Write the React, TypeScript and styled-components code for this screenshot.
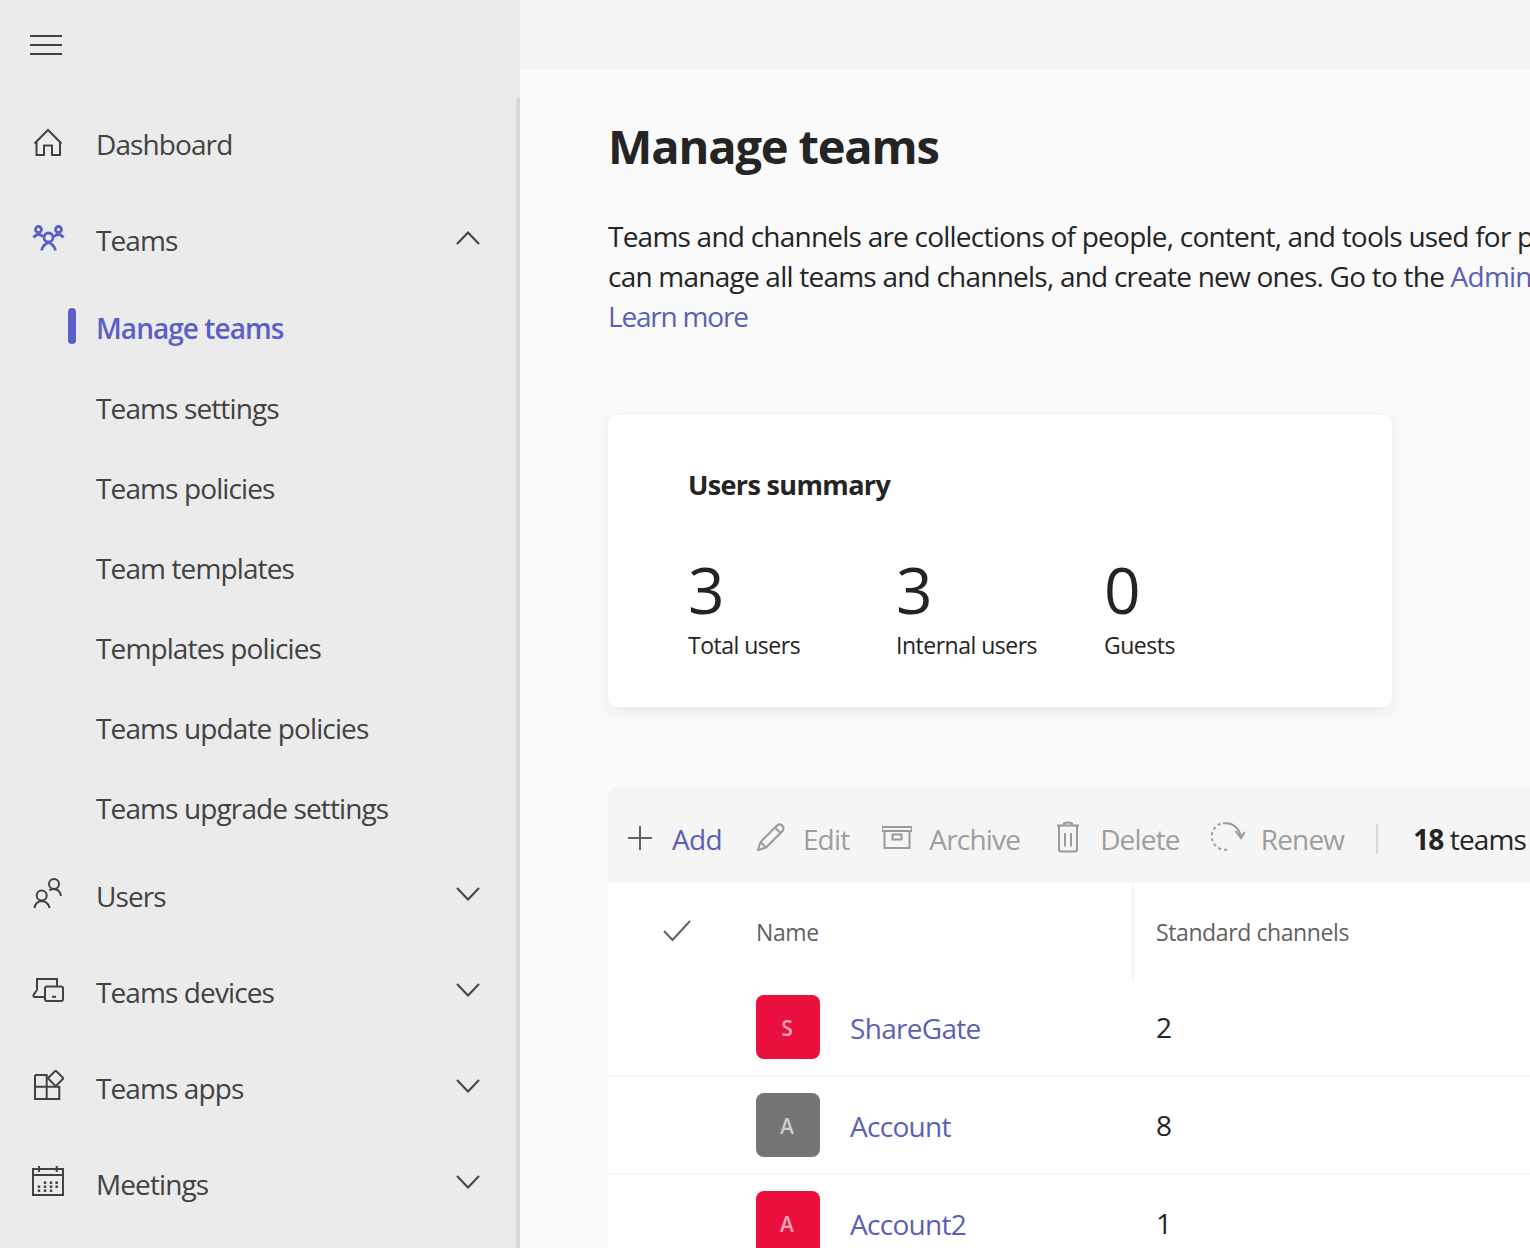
import React from 'react';
import styled, { createGlobalStyle } from 'styled-components';

const GlobalStyle = createGlobalStyle`
  html, body {
    margin: 0;
    padding: 0;
    overflow: hidden;
    background: #fafafa;
  }
  * {
    box-sizing: border-box;
  }
`;

const Shell = styled.div`
  display: flex;
  width: 1530px;
  height: 1248px;
  overflow: hidden;
  font-family: 'Open Sans', 'Noto Sans', sans-serif;
  font-size: 28px;
  letter-spacing: -0.7px;
  color: #242424;
`;

const Sidebar = styled.nav`
  position: relative;
  flex: 0 0 520px;
  background: #ebebeb;
`;

const ScrollThumb = styled.div`
  position: absolute;
  right: 0;
  top: 97px;
  bottom: 0;
  width: 4px;
  background: #d9d9d9;
  border-top-left-radius: 4px;
`;

const MenuBar = styled.div`
  display: flex;
  align-items: center;
  height: 96px;
  padding: 0 0 6px 30px;
`;

const NavRow = styled.div`
  display: flex;
  align-items: center;
  height: 96px;
  padding-left: 32px;
  color: #424242;
  letter-spacing: -0.9px;
`;

const NavIcon = styled.span`
  display: flex;
  width: 64px;
  flex: none;
  margin-top: -4px;
`;

const NavLabel = styled.span`
  flex: 1;
`;

const Chevron = styled.span`
  display: flex;
  margin-right: 40px;
  margin-top: -4px;
`;

const SubRow = styled.div<{ $active?: boolean }>`
  position: relative;
  display: flex;
  align-items: center;
  height: 80px;
  padding-left: 96px;
  letter-spacing: ${(p) => (p.$active ? '-0.95px' : '-0.88px')};
  color: ${(p) => (p.$active ? '#5b5fc7' : '#424242')};
  font-weight: ${(p) => (p.$active ? 600 : 400)};
`;

const ActiveMarker = styled.span`
  position: absolute;
  left: 68px;
  top: 20px;
  width: 8px;
  height: 36px;
  border-radius: 4px;
  background: #5b5fc7;
`;

const Main = styled.main`
  flex: 1;
  min-width: 0;
  overflow: hidden;
  background: #fafafa;
`;

const TopBar = styled.div`
  height: 70px;
  background: #f5f5f5;
`;

const Content = styled.div`
  width: 1300px;
  padding-left: 88px;
`;

const Title = styled.h1`
  margin: 44px 0 0;
  font-size: 47px;
  line-height: 64px;
  font-weight: 700;
  letter-spacing: -1.15px;
  color: #242424;
`;

const Intro = styled.p`
  margin: 38px 0 0;
  line-height: 40px;
  letter-spacing: -0.77px;
  white-space: nowrap;
`;

const TextLink = styled.a`
  color: #5b5fb5;
`;

const LearnMore = styled(TextLink)`
  letter-spacing: -1.2px;
`;

const SummaryCard = styled.section`
  width: 784px;
  height: 292px;
  margin-top: 79px;
  padding: 50px 80px 0;
  background: #fff;
  border-radius: 8px;
  box-shadow: 0 4px 16px rgba(0, 0, 0, 0.08);
`;

const CardTitle = styled.h2`
  margin: 0;
  font-size: 27px;
  line-height: 40px;
  font-weight: 700;
  letter-spacing: -0.65px;
`;

const Stats = styled.div`
  display: flex;
  margin-top: 46px;
`;

const Stat = styled.div`
  width: 208px;
`;

const StatValue = styled.div`
  font-size: 64px;
  line-height: 78px;
  letter-spacing: 0;
`;

const StatLabel = styled.div`
  font-size: 23px;
  line-height: 32px;
  letter-spacing: -0.5px;
`;

const TeamsPanel = styled.section`
  margin-top: 80px;
  background: #fff;
`;

const Toolbar = styled.div`
  display: flex;
  align-items: center;
  height: 96px;
  padding-left: 20px;
  padding-top: 8px;
  background: #f5f5f5;
  border-radius: 8px 8px 0 0;
  white-space: nowrap;
`;

const ToolItem = styled.div<{ $disabled?: boolean; $gap: number; $after: number }>`
  display: flex;
  align-items: center;
  gap: ${(p) => p.$gap}px;
  margin-right: ${(p) => p.$after}px;
  letter-spacing: ${(p) => (p.$disabled ? '-0.82px' : '-0.7px')};
  color: ${(p) => (p.$disabled ? '#9e9e9e' : '#5b5fb5')};
`;

const ToolDivider = styled.span`
  width: 2px;
  height: 30px;
  margin-right: 35px;
  background: #d9d9d9;
`;

const TeamCount = styled.div`
  color: #242424;
  letter-spacing: -0.9px;
  b {
    font-weight: 700;
  }
`;

const HeaderRow = styled.div`
  display: flex;
  align-items: center;
  height: 96px;
  padding-top: 2px;
  color: #616161;
  font-size: 23px;
  letter-spacing: -0.4px;
`;

const CheckCell = styled.div`
  display: flex;
  width: 148px;
  padding-left: 55px;
  margin-top: -2px;
`;

const NameHeader = styled.div`
  width: 376px;
`;

const ChannelHeader = styled.div`
  display: flex;
  align-items: center;
  height: 100%;
  padding-left: 22px;
  border-left: 2px solid #f3f3f3;
`;

const TeamRow = styled.div`
  display: flex;
  align-items: center;
  height: 98px;
  padding-left: 148px;
  border-bottom: 2px solid #f5f5f5;
`;

const Avatar = styled.div<{ $color: string }>`
  display: flex;
  align-items: center;
  justify-content: center;
  flex: none;
  width: 64px;
  height: 64px;
  padding: 2px 2px 0 0;
  border-radius: 8px;
  background: ${(p) => p.$color};
  color: rgba(255, 255, 255, 0.65);
  font-size: 21px;
  font-weight: 600;
  letter-spacing: 0;
`;

const TeamName = styled.a`
  width: 306px;
  margin-left: 30px;
  padding-top: 2px;
  color: #5b5fb5;
`;

const ChannelCount = styled.div`
  color: #242424;
`;

const Svg = styled.svg`
  display: block;
  flex: none;
  fill: none;
  stroke: currentColor;
  stroke-width: 2;
`;

const DarkSvg = styled(Svg)`
  color: #424242;
`;

const ToolSvg = styled(Svg)`
  color: #9a9a9a;
  margin-top: -4px;
`;

const MenuIcon = () => (
  <DarkSvg width="32" height="20" viewBox="0 0 32 20">
    <path d="M0 1h32M0 10h32M0 19h32" />
  </DarkSvg>
);

const HomeIcon = () => (
  <DarkSvg width="32" height="32" viewBox="0 0 32 32">
    <path d="M2.5 17.500L16 4l13.500 13.500M4.500 15.500V29H12V19.500h8V29h8V15.500" />
  </DarkSvg>
);

const TeamsIcon = () => (
  <Svg width="34" height="32" viewBox="0 -1 34 32" style={{ color: '#5b5fc7', strokeWidth: 2.8 }}>
    <circle cx="6.500" cy="6.500" r="3" />
    <circle cx="26.500" cy="6.500" r="3" />
    <circle cx="16.500" cy="14.500" r="4.500" />
    <path d="M1.500 14.500Q6 9 11 13.500M22 13.500Q27 9 31.500 14.500M9.500 27.500Q11 21.500 16.500 19.500Q22 21.500 23.500 27.500" />
  </Svg>
);

const UsersIcon = () => (
  <DarkSvg width="32" height="32" viewBox="0 0 32 32">
    <circle cx="9.700" cy="17.500" r="5" />
    <circle cx="22" cy="6" r="5" />
    <path d="M2.500 30Q3.500 23.500 9.700 23Q16 23.500 17.500 30M17.300 12.500Q20 10.800 23 11.200Q28 12 29 18" />
  </DarkSvg>
);

const DevicesIcon = () => (
  <DarkSvg width="32" height="28" viewBox="0 0 32 28">
    <path d="M5 14V3h20v7.500M5 14l-3.500 5q-.5 2 1.500 2h10" />
    <rect x="13" y="10.500" width="18" height="14.500" rx="2" />
    <path d="M20 20.800h4" />
  </DarkSvg>
);

const AppsIcon = () => (
  <DarkSvg width="32" height="32" viewBox="0 0 32 32">
    <path d="M3 5h11.700v24M3 5v24h24.300V16.700H3" />
    <path d="M23.700.5l7.800 7.800-7.800 7.800-7.800-7.800z" />
  </DarkSvg>
);

const calendarDots = [
  [13, 16.700], [19, 16.700], [24.700, 16.700],
  [7, 20.700], [13, 20.700], [19, 20.700], [24.700, 20.700],
  [7, 24.700], [13, 24.700], [19, 24.700],
];

const CalendarIcon = () => (
  <DarkSvg width="32" height="32" viewBox="0 0 32 32">
    <path d="M1 3h30v26H1zM1 9h30M7 0v6M24.700 0v6" />
    {calendarDots.map(([x, y]) => (
      <rect key={`${x}-${y}`} x={x - 1.25} y={y - 1.25} width="2.500" height="2.500" fill="#424242" stroke="none" />
    ))}
  </DarkSvg>
);

const ChevronIcon = ({ up }: { up?: boolean }) => (
  <DarkSvg width="24" height="14" viewBox="0 0 24 14">
    <path d={up ? 'M1 13L12 1.500l11 11.500' : 'M1 1l11 11.500L23 1'} />
  </DarkSvg>
);

const PlusIcon = () => (
  <Svg width="24" height="24" viewBox="0 0 24 24" style={{ color: '#616161', marginTop: -2 }}>
    <path d="M0 12h24M12 0v24" />
  </Svg>
);

const PencilIcon = () => (
  <ToolSvg width="28" height="28" viewBox="0 0 28 28">
    <path d="M1 27l2.500-8L20 2.500q3-2.500 5.500.5 2 2.500 0 5L9 24.500zM3.500 19L9 24.500M18 4.500l5.500 5.500" />
  </ToolSvg>
);

const ArchiveIcon = () => (
  <ToolSvg width="30" height="26" viewBox="1 1 30 26" style={{ marginTop: -2 }}>
    <path d="M1 3h30v4H1zM3.500 7v17h25V7" />
    <rect x="11.500" y="10.500" width="9" height="5" />
  </ToolSvg>
);

const TrashIcon = () => (
  <ToolSvg width="22" height="32" viewBox="0 0 22 32">
    <path d="M0 4.500h22M7 4.500V2.500Q11 .5 15 2.500v2M2 4.500V28q0 2.500 2.500 2.500h13q2.500 0 2.500-2.500V4.500M8 12v13.500M14 12v13.500" />
  </ToolSvg>
);

const RenewIcon = () => (
  <ToolSvg width="35" height="32" viewBox="0 0 35 32">
    <path d="M13 2.300Q27 1 30.800 15M25.500 10l5.500 7 3.500-6" />
    <path d="M10.500 2.800A13 13 0 0 0 20 28" strokeDasharray="3 3" />
  </ToolSvg>
);

const CheckIcon = () => (
  <Svg width="28" height="22" viewBox="0 0 28 22" style={{ color: '#616161' }}>
    <path d="M1 11l8.500 9L27 1" />
  </Svg>
);

const subItems = [
  'Teams settings',
  'Teams policies',
  'Team templates',
  'Templates policies',
  'Teams update policies',
  'Teams upgrade settings',
];

const lowerItems = [
  { label: 'Users', icon: <UsersIcon /> },
  { label: 'Teams devices', icon: <DevicesIcon /> },
  { label: 'Teams apps', icon: <AppsIcon /> },
  { label: 'Meetings', icon: <CalendarIcon /> },
];

const stats = [
  { value: 3, label: 'Total users' },
  { value: 3, label: 'Internal users' },
  { value: 0, label: 'Guests' },
];

const teams = [
  { initial: 'S', name: 'ShareGate', color: '#eb0f3e', channels: 2 },
  { initial: 'A', name: 'Account', color: '#757575', channels: 8 },
  { initial: 'A', name: 'Account2', color: '#eb0f3e', channels: 1 },
];

export default function App() {
  return (
    <>
      <GlobalStyle />
      <Shell>
        <Sidebar>
          <ScrollThumb />
          <MenuBar>
            <MenuIcon />
          </MenuBar>
          <NavRow>
            <NavIcon>
              <HomeIcon />
            </NavIcon>
            <NavLabel>Dashboard</NavLabel>
          </NavRow>
          <NavRow>
            <NavIcon>
              <TeamsIcon />
            </NavIcon>
            <NavLabel>Teams</NavLabel>
            <Chevron>
              <ChevronIcon up />
            </Chevron>
          </NavRow>
          <SubRow $active>
            <ActiveMarker />
            Manage teams
          </SubRow>
          {subItems.map((item) => (
            <SubRow key={item}>{item}</SubRow>
          ))}
          {lowerItems.map((item) => (
            <NavRow key={item.label}>
              <NavIcon>{item.icon}</NavIcon>
              <NavLabel>{item.label}</NavLabel>
              <Chevron>
                <ChevronIcon />
              </Chevron>
            </NavRow>
          ))}
        </Sidebar>
        <Main>
          <TopBar />
          <Content>
            <Title>Manage teams</Title>
            <Intro>
              Teams and channels are collections of people, content, and tools used for projects and
              <br />
              can manage all teams and channels, and create new ones. Go to the{' '}
              <TextLink>Admin center</TextLink>
              <br />
              <LearnMore>Learn more</LearnMore>
            </Intro>
            <SummaryCard>
              <CardTitle>Users summary</CardTitle>
              <Stats>
                {stats.map((stat) => (
                  <Stat key={stat.label}>
                    <StatValue>{stat.value}</StatValue>
                    <StatLabel>{stat.label}</StatLabel>
                  </Stat>
                ))}
              </Stats>
            </SummaryCard>
            <TeamsPanel>
              <Toolbar>
                <ToolItem $gap={20} $after={35}>
                  <PlusIcon />
                  Add
                </ToolItem>
                <ToolItem $disabled $gap={18} $after={33}>
                  <PencilIcon />
                  Edit
                </ToolItem>
                <ToolItem $disabled $gap={17} $after={37}>
                  <ArchiveIcon />
                  Archive
                </ToolItem>
                <ToolItem $disabled $gap={21} $after={30}>
                  <TrashIcon />
                  Delete
                </ToolItem>
                <ToolItem $disabled $gap={16} $after={32}>
                  <RenewIcon />
                  Renew
                </ToolItem>
                <ToolDivider />
                <TeamCount>
                  <b>18</b> teams
                </TeamCount>
              </Toolbar>
              <HeaderRow>
                <CheckCell>
                  <CheckIcon />
                </CheckCell>
                <NameHeader>Name</NameHeader>
                <ChannelHeader>Standard channels</ChannelHeader>
              </HeaderRow>
              {teams.map((team) => (
                <TeamRow key={team.name}>
                  <Avatar $color={team.color}>{team.initial}</Avatar>
                  <TeamName>{team.name}</TeamName>
                  <ChannelCount>{team.channels}</ChannelCount>
                </TeamRow>
              ))}
            </TeamsPanel>
          </Content>
        </Main>
      </Shell>
    </>
  );
}
